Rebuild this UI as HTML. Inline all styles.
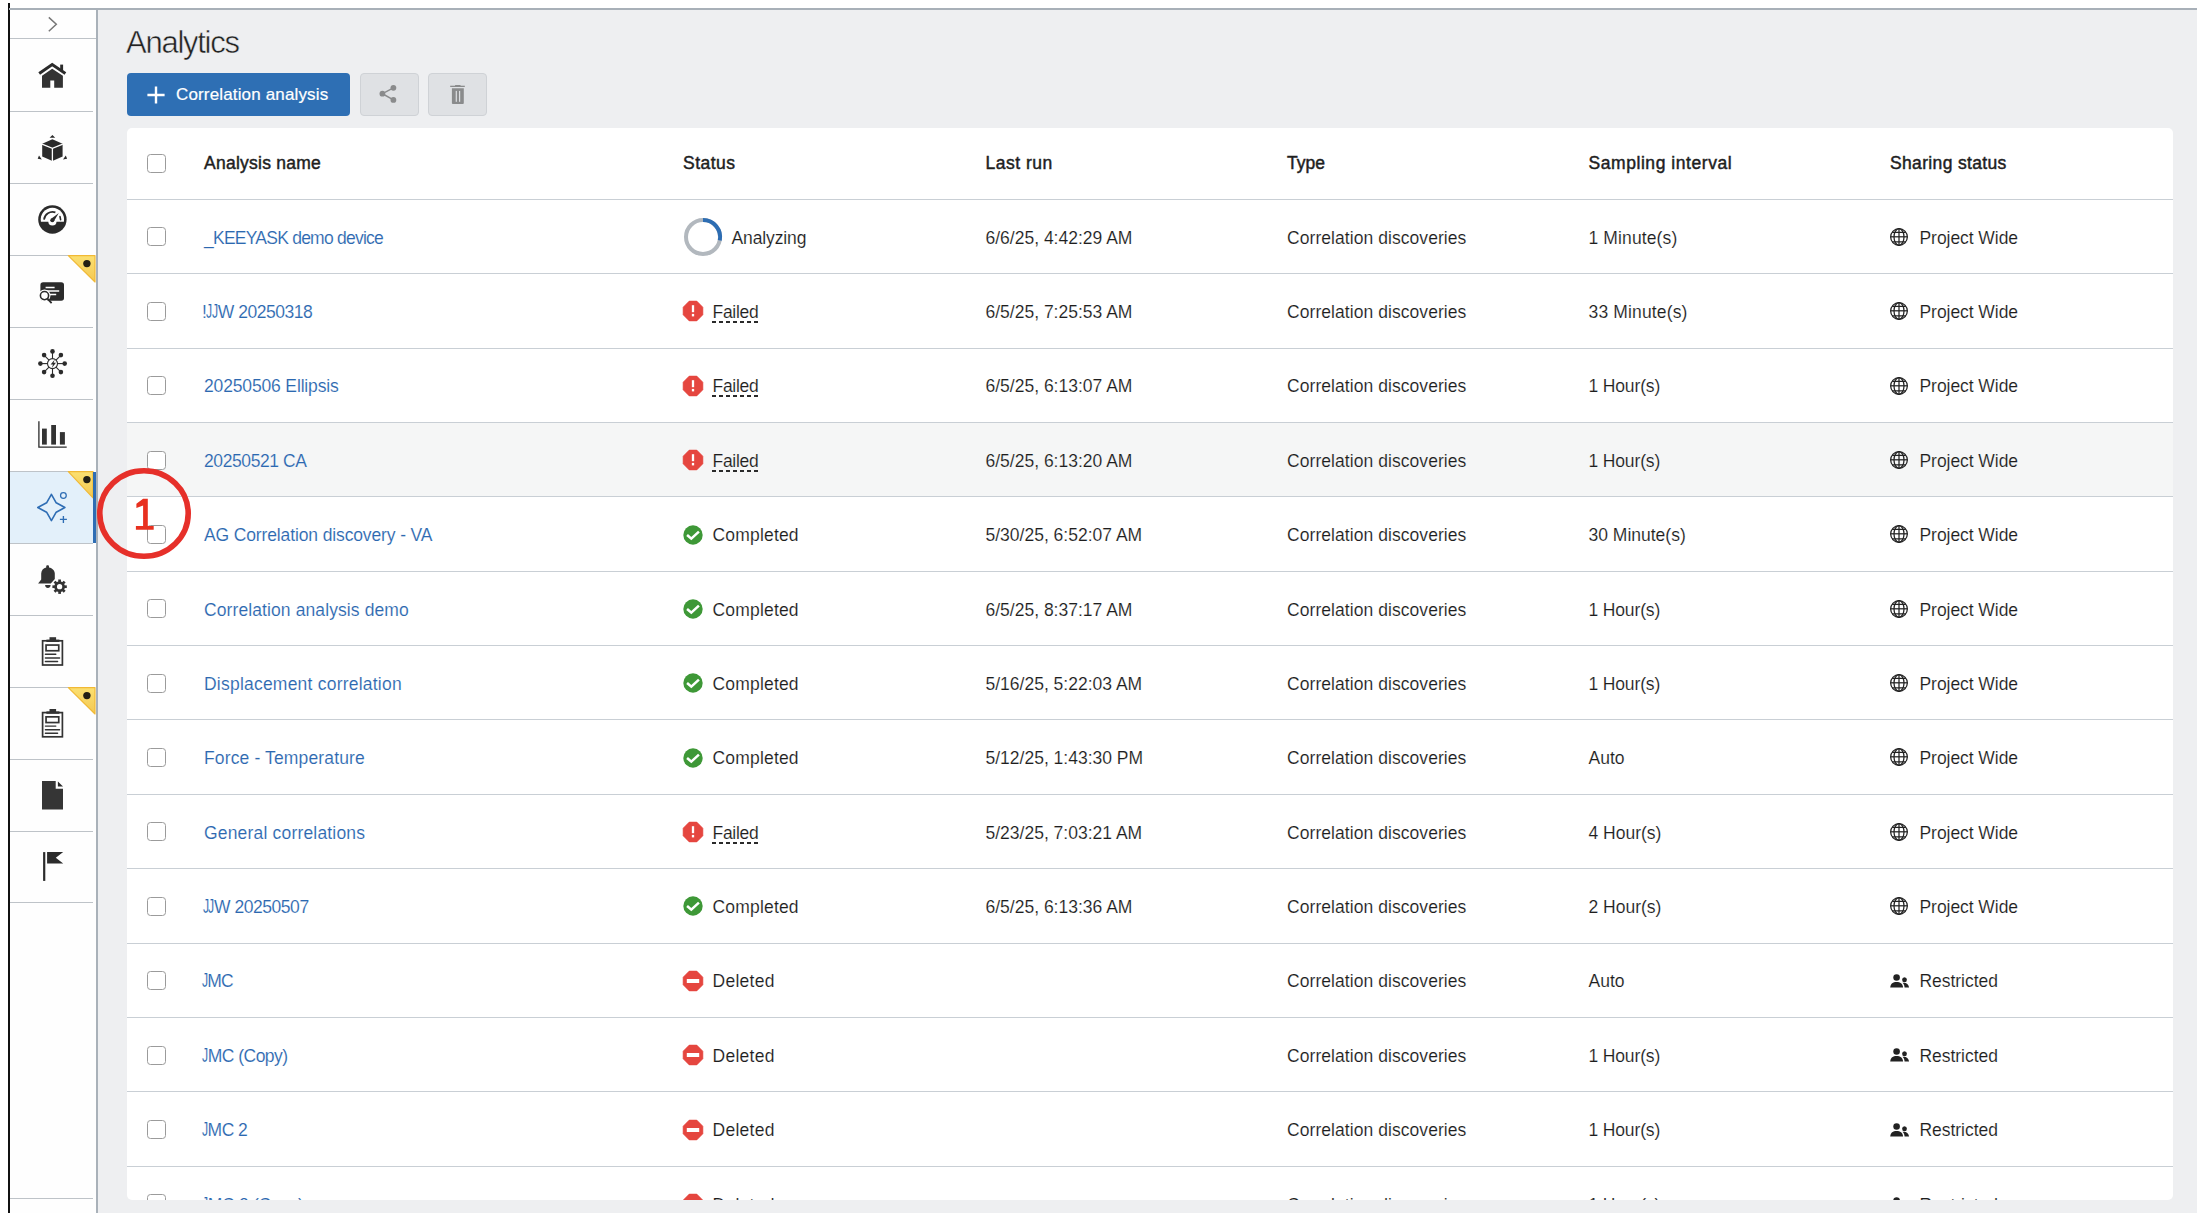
<!DOCTYPE html>
<html><head><meta charset="utf-8"><title>Analytics</title>
<style>
html,body{margin:0;padding:0;overflow:hidden;}
body{width:2204px;height:1218px;overflow:hidden;background:#fff;position:relative;font-family:"Liberation Sans",sans-serif;color:#222;}
#black{position:absolute;left:8px;top:3px;width:1.6px;height:1210px;background:#111;}
#topline{position:absolute;left:9px;top:8.2px;width:2188px;height:2px;background:#a8b0b8;}
#side{position:absolute;left:9.6px;top:10.2px;width:86.4px;height:1203px;background:#fefefe;}
#sideborder{position:absolute;left:96px;top:10.2px;width:2px;height:1203px;background:#a9b1b9;}
#main{position:absolute;left:98px;top:10.2px;width:2099px;height:1202.8px;background:#eeeff1;}
.ssep{position:absolute;left:9.6px;width:83.6px;height:1px;background:#bec3c8;}
#sel{position:absolute;left:9.6px;top:471.5px;width:86.4px;height:71.3px;background:#e3f0fa;}
#selbar{position:absolute;left:93px;top:471.7px;width:3px;height:71px;background:#2e6db4;}
#title{position:absolute;left:126.1px;top:26.1px;font-size:31px;line-height:34px;color:#222;letter-spacing:-1.28px;-webkit-text-stroke:0.5px #eeeff1;}
#addbtn{position:absolute;left:127px;top:73px;width:223px;height:43px;background:#2e6fb4;border-radius:4px;}
#addbtn .lbl{position:absolute;left:49px;top:10.5px;font-size:17px;line-height:22px;color:#fff;letter-spacing:0.15px;-webkit-text-stroke:0.2px #fff;}
.gbtn{position:absolute;top:73px;height:41px;background:#dfe1e4;border:1px solid #cfd2d6;border-radius:4px;}
#card{position:absolute;left:127px;top:128px;width:2046px;height:1072px;background:#fff;border-radius:5px;}
.sep{position:absolute;left:127px;width:2046px;height:1px;background:#c9cfd5;}
.hover{position:absolute;left:127px;width:2046px;background:#f5f6f6;}
.cb{position:absolute;left:147px;width:17px;height:17px;border:1px solid #9b9b9b;border-radius:3.5px;background:#fff;}
.t{position:absolute;font-size:17.5px;line-height:22px;white-space:nowrap;color:#1e1e1e;-webkit-text-stroke:0.12px #fff;}
.h{color:#1e1e1e;-webkit-text-stroke:0.45px #1e1e1e;}
.link{color:#2c68b0;}
.j{display:inline-block;transform:scale(0.7,1.18);transform-origin:left 70%;margin-right:-2.6px;}
.dash{position:absolute;left:712px;width:46px;height:2px;background:repeating-linear-gradient(90deg,#2a2a2a 0,#2a2a2a 4px,transparent 4px,transparent 7px);}
#clip{position:absolute;left:0;top:0;width:2204px;height:1200px;overflow:hidden;}
</style></head><body>
<svg width="0" height="0" style="position:absolute"><defs><linearGradient id="yg" x1="0" y1="0" x2="0" y2="1"><stop offset="0" stop-color="#fbe071"/><stop offset="1" stop-color="#f3c853"/></linearGradient></defs></svg>
<div id="main"></div>
<div id="side"></div>
<div id="sel"></div>
<div class="ssep" style="top:110.8px"></div>
<div class="ssep" style="top:183.1px"></div>
<div class="ssep" style="top:255.0px"></div>
<div class="ssep" style="top:327.0px"></div>
<div class="ssep" style="top:399.0px"></div>
<div class="ssep" style="top:471.0px"></div>
<div class="ssep" style="top:542.9px"></div>
<div class="ssep" style="top:615.0px"></div>
<div class="ssep" style="top:687.0px"></div>
<div class="ssep" style="top:758.7px"></div>
<div class="ssep" style="top:830.5px"></div>
<div class="ssep" style="top:902.2px"></div>
<div class="ssep" style="top:37.9px;width:86.4px"></div>
<div class="ssep" style="top:1197.6px"></div>
<svg style="position:absolute;left:0;top:0" width="100" height="910" viewBox="0 0 100 910">
 <polyline points="48.8,17.4 56.3,24.3 48.8,31.2" fill="none" stroke="#777" stroke-width="1.5"/>
 <polyline points="39.2,73.6 52.2,64.6 65.4,73.6" fill="none" stroke="#2b2b2b" stroke-width="3"/>
 <rect x="60.2" y="64.6" width="2.9" height="6.5" fill="#2b2b2b"/>
 <path d="M42,75.8 L52.2,68.7 L62.9,75.8 L62.9,87.8 L54.2,87.8 L54.2,80.4 L50.3,80.4 L50.3,87.8 L42,87.8 Z" fill="#333"/>
 <path d="M52.4,139.2 L62.6,143.8 L62.6,156.5 L52.4,161 L42.2,156.5 L42.2,143.8 Z" fill="#2b2b2b"/>
 <path d="M42,144.1 L52.4,148.4 L62.8,144.1 M52.4,148.4 V161.5" fill="none" stroke="#fff" stroke-width="1.3"/>
 <path d="M52.4,134.9 L55.2,137.7 L49.6,137.7 Z M39,155.6 L41.8,159.6 L37.7,158.8 Z M65.8,155.6 L67.1,158.8 L63,159.6 Z" fill="#2b2b2b"/>
 <circle cx="52.4" cy="219.5" r="14.2" fill="#2b2b2b"/>
 <path d="M40.9,221.7 A11.7,11.7 0 1 1 63.9,221.7 Z" fill="#fff"/>
 <circle cx="52.4" cy="221.5" r="4.1" fill="#fff"/>
 <path d="M44,219.6 A8.6,8.6 0 0 1 55.4,212.4" fill="none" stroke="#2b2b2b" stroke-width="1.7"/>
 <path d="M60,216.6 L60.6,219.7" stroke="#2b2b2b" stroke-width="1.6" stroke-linecap="round"/>
 <path d="M50.9,219 L58.8,213 L53.7,221.6 Z" fill="#2b2b2b"/>
 <circle cx="52.3" cy="220.3" r="2.05" fill="#2b2b2b"/>
 <rect x="40.4" y="282.2" width="23.6" height="18.6" rx="2.8" fill="#2b2b2b"/>
 <path d="M45.6,287.4 H54.6 M47,290.9 H59.2 M50,294.4 H56.2" stroke="#fff" stroke-width="1.5"/>
 <circle cx="44.5" cy="295.6" r="6" fill="#fff"/>
 <circle cx="44.5" cy="295.6" r="4.1" fill="#fff" stroke="#2b2b2b" stroke-width="1.6"/>
 <path d="M47.4,298.6 L51.6,303.2" stroke="#2b2b2b" stroke-width="1.8"/>
<g transform="translate(0.4,0)">
 <g stroke="#2b2b2b" stroke-width="1.1">
  <line x1="52.1" y1="351.6" x2="52.1" y2="375.6"/><line x1="40.1" y1="363.6" x2="64.1" y2="363.6"/>
  <line x1="43.6" y1="355.1" x2="60.6" y2="372.1"/><line x1="60.6" y1="355.1" x2="43.6" y2="372.1"/>
 </g>
 <g fill="#2b2b2b">
  <circle cx="52.1" cy="351.4" r="2.3"/><circle cx="52.1" cy="375.8" r="2.3"/>
  <circle cx="40" cy="363.6" r="2.3"/><circle cx="64.3" cy="363.6" r="2.3"/>
  <circle cx="43.7" cy="355.1" r="2.3"/><circle cx="60.5" cy="355.1" r="2.3"/>
  <circle cx="43.7" cy="372.1" r="2.3"/><circle cx="60.5" cy="372.1" r="2.3"/>
 </g>
 <circle cx="52.1" cy="363.6" r="5" fill="#fff" stroke="#2b2b2b" stroke-width="1.1"/>
 <path d="M54.4,359.4 L50.2,364.6 L52.6,364.6 L51.4,368 L55.6,362.8 L53.2,362.8 Z" fill="#2b2b2b"/>
</g>
 <path d="M38.9,421.2 V447.2 H66.7" fill="none" stroke="#2b2b2b" stroke-width="1.3"/>
 <rect x="42" y="428.6" width="4.8" height="16" fill="#333"/>
 <rect x="51.2" y="425" width="4.8" height="19.6" fill="#333"/>
 <rect x="59.9" y="432.1" width="5" height="12.5" fill="#333"/>
 <path d="M38.1,583.6 L41.2,579.6 L41.2,573.6 C41.2,570.3 43.4,568.1 46.2,567.4 L46.2,566.4 C46.2,565 49,565 49,566.4 L49,567.4 C52.4,568.1 54.8,570.6 54.8,573.6 L54.8,578.9 L50.8,583.6 Z" fill="#333"/>
 <path d="M45.1,585.1 H50.6 A2.75,2.8 0 0 1 45.1,585.1 Z" fill="#333"/>
 <g transform="translate(59.6,586.7)" fill="#333">
  <circle r="4" fill="none" stroke="#333" stroke-width="2.7"/>
  <rect x="-1.35" y="-7.2" width="2.7" height="3.4"/><rect x="-1.35" y="3.8" width="2.7" height="3.4"/>
  <rect x="-7.2" y="-1.35" width="3.4" height="2.7"/><rect x="3.8" y="-1.35" width="3.4" height="2.7"/>
  <g transform="rotate(45)"><rect x="-1.35" y="-7.2" width="2.7" height="3.4"/><rect x="-1.35" y="3.8" width="2.7" height="3.4"/>
  <rect x="-7.2" y="-1.35" width="3.4" height="2.7"/><rect x="3.8" y="-1.35" width="3.4" height="2.7"/></g>
 </g>
 <g>
  <rect x="42.6" y="640.8" width="19.8" height="24.2" fill="none" stroke="#333" stroke-width="1.7"/>
  <rect x="49.5" y="637.2" width="6.6" height="3.2" fill="#333"/>
  <rect x="46.4" y="639.6" width="13" height="2.4" fill="#333"/>
  <rect x="46.05" y="645.05" width="12.7" height="5.7" fill="none" stroke="#333" stroke-width="1.7"/>
  <path d="M45.4,654.3 H55.8 M45.4,658 H59.6 M45.4,661.5 H57.6" stroke="#333" stroke-width="1.4" stroke-linecap="round"/>
 </g>
 <g transform="translate(0,71.8)">
  <rect x="42.6" y="640.8" width="19.8" height="24.2" fill="none" stroke="#333" stroke-width="1.7"/>
  <rect x="49.5" y="637.2" width="6.6" height="3.2" fill="#333"/>
  <rect x="46.4" y="639.6" width="13" height="2.4" fill="#333"/>
  <rect x="46.05" y="645.05" width="12.7" height="5.7" fill="none" stroke="#333" stroke-width="1.7"/>
  <path d="M45.4,654.3 H55.8 M45.4,658 H59.6 M45.4,661.5 H57.6" stroke="#333" stroke-width="1.4" stroke-linecap="round"/>
 </g>
 <path d="M42,781.1 H55.7 V788.7 H63 V809.5 H42 Z" fill="#353535"/>
 <path d="M57.9,781.4 L63,786.6 L57.9,786.6 Z" fill="#2b2b2b"/>
 <rect x="43.1" y="852.1" width="2.2" height="28.8" fill="#2b2b2b"/>
 <path d="M47.1,852.1 L63.2,852.1 L55.8,857.8 L63.2,863.4 L47.1,863.4 Z" fill="#2b2b2b"/>
 <path d="M51.4,494.3 L46.6,502.8 L37.8,507.5 L46.6,512.2 L51.4,520.6 L56.2,512.2 L64.9,507.5 L56.2,502.8 Z" fill="none" stroke="#2e6db4" stroke-width="1.6" stroke-linejoin="round"/>
 <circle cx="63.4" cy="495.4" r="2.85" fill="none" stroke="#2e6db4" stroke-width="1.25"/>
 <path d="M63.4,515.9 V522.9 M59.9,519.4 H66.9" stroke="#2e6db4" stroke-width="1.35"/>
</svg>

<svg style="position:absolute;left:67px;top:254.9px" width="30" height="30" viewBox="0 0 30 30"><path d="M1.3,0.6 L28.0,0.6 L28.0,27.0 Z" fill="url(#yg)" stroke="#f1b935" stroke-width="1.2" stroke-linejoin="round"/><circle cx="19.9" cy="8.6" r="3.7" fill="#231f14"/></svg>
<svg style="position:absolute;left:67px;top:470.8px" width="30" height="30" viewBox="0 0 30 30"><path d="M1.3,0.6 L26.0,0.6 L26.0,26.8 Z" fill="url(#yg)" stroke="#f1b935" stroke-width="1.2" stroke-linejoin="round"/><circle cx="19.9" cy="8.6" r="3.7" fill="#231f14"/></svg>
<svg style="position:absolute;left:67px;top:686.9px" width="30" height="30" viewBox="0 0 30 30"><path d="M1.3,0.6 L28.0,0.6 L28.0,27.0 Z" fill="url(#yg)" stroke="#f1b935" stroke-width="1.2" stroke-linejoin="round"/><circle cx="19.9" cy="8.6" r="3.7" fill="#231f14"/></svg>
<div id="selbar"></div>
<div id="sideborder"></div>
<div id="black"></div>
<div id="topline"></div>

<div id="title">Analytics</div>
<div id="addbtn">
 <svg style="position:absolute;left:20px;top:12.5px" width="18" height="18" viewBox="0 0 18 18"><path d="M9,0.4 V17.6 M0.4,9 H17.6" stroke="#fff" stroke-width="2.4"/></svg>
 <div class="lbl">Correlation analysis</div>
</div>
<div class="gbtn" style="left:359.5px;width:57.5px;">
 <svg style="position:absolute;left:17px;top:10px" width="20" height="20" viewBox="0 0 20 20" fill="#8a8b8c">
  <circle cx="15.4" cy="3.8" r="2.9"/><circle cx="4.4" cy="9.7" r="2.9"/><circle cx="15.4" cy="15.9" r="2.9"/>
  <path d="M15.4,3.8 L4.4,9.7 L15.4,15.9" fill="none" stroke="#8a8b8c" stroke-width="1.5"/>
 </svg>
</div>
<div class="gbtn" style="left:428px;width:57px;">
 <svg style="position:absolute;left:20px;top:11px" width="18" height="20" viewBox="0 0 18 20" fill="#8a8b8c">
  <rect x="1.2" y="0.7" width="14.6" height="1.3"/><rect x="6" y="0" width="5.6" height="1.2" rx="0.5"/>
  <path d="M2.9,3.2 H14.8 V18 Q14.8,19 13.8,19 H3.9 Q2.9,19 2.9,18 Z"/>
  <rect x="6.7" y="5.9" width="1.2" height="10.9" fill="#dcdee1"/><rect x="10" y="5.9" width="1.2" height="10.9" fill="#dcdee1"/>
 </svg>
</div>

<div id="card"></div>
<div id="clip">
<div class="sep" style="top:198.80px"></div>
<div class="cb" style="top:154px"></div>
<div class="t h" style="left:204px;top:152.10px;letter-spacing:0.25px">Analysis name</div>
<div class="t h" style="left:683px;top:152.10px;letter-spacing:0.46px">Status</div>
<div class="t h" style="left:985.5px;top:152.10px;letter-spacing:0.50px">Last run</div>
<div class="t h" style="left:1287px;top:152.10px">Type</div>
<div class="t h" style="left:1588.5px;top:152.10px;letter-spacing:0.56px">Sampling interval</div>
<div class="t h" style="left:1890px;top:152.10px;letter-spacing:0.34px">Sharing status</div>
<div class="sep" style="top:273.18px"></div>
<div class="cb" style="top:227.39px"></div>
<div class="t link" style="left:204px;top:226.69px;letter-spacing:-0.76px">_KEEYASK demo device</div>
<svg style="position:absolute;left:680.5px;top:215.09px" width="44" height="44" viewBox="0 0 44 44"><circle cx="22" cy="22" r="17" fill="none" stroke="#b2b8be" stroke-width="4"/><path d="M22,5 A17,17 0 0 1 38.8,25.3" fill="none" stroke="#2d6db3" stroke-width="4"/></svg>
<div class="t" style="left:731.5px;top:226.69px;letter-spacing:-0.12px">Analyzing</div>
<div class="t" style="left:985.5px;top:226.69px">6/6/25, 4:42:29 AM</div>
<div class="t" style="left:1287px;top:226.69px;letter-spacing:0.06px">Correlation discoveries</div>
<div class="t" style="left:1588.5px;top:226.69px;letter-spacing:0.12px">1 Minute(s)</div>
<div style="position:absolute;left:1889.25px;top:226.79px;width:20px;height:20px"><svg width="20" height="20" viewBox="0 0 20 20" fill="none" stroke="#222" stroke-width="1.25"><circle cx="10" cy="10" r="8.35"/><ellipse cx="10" cy="10" rx="5" ry="8.35"/><line x1="10" y1="1.6" x2="10" y2="18.4"/><line x1="1.6" y1="9.8" x2="18.4" y2="9.8"/><path d="M3.2,5.4 H16.8 M3.2,14.9 H16.8"/></svg></div>
<div class="t" style="left:1919.5px;top:226.69px;letter-spacing:-0.06px">Project Wide</div><div class="sep" style="top:347.56px"></div>
<div class="cb" style="top:301.77px"></div>
<div class="t link" style="left:202px;top:301.07px;letter-spacing:-0.48px">!<span class="j">J</span><span class="j">J</span>W 20250318</div>
<div style="position:absolute;left:682px;top:300.37px;width:22px;height:22px"><svg class="si" width="22" height="22" viewBox="0 0 22 22"><polygon points="7.2,1.1 14.8,1.1 20.9,7.2 20.9,14.8 14.8,20.9 7.2,20.9 1.1,14.8 1.1,7.2" fill="#e5463f" stroke="#e5463f" stroke-width="0.6" stroke-linejoin="round"/><rect x="9.85" y="5.2" width="2.3" height="7" fill="#fff"/><rect x="9.85" y="13.9" width="2.3" height="2.5" fill="#fff"/></svg></div>
<div class="t" style="left:712.5px;top:301.07px;letter-spacing:-0.28px">Failed</div>
<div class="dash" style="top:321px"></div>
<div class="t" style="left:985.5px;top:301.07px">6/5/25, 7:25:53 AM</div>
<div class="t" style="left:1287px;top:301.07px;letter-spacing:0.06px">Correlation discoveries</div>
<div class="t" style="left:1588.5px;top:301.07px;letter-spacing:0.15px">33 Minute(s)</div>
<div style="position:absolute;left:1889.25px;top:301.17px;width:20px;height:20px"><svg width="20" height="20" viewBox="0 0 20 20" fill="none" stroke="#222" stroke-width="1.25"><circle cx="10" cy="10" r="8.35"/><ellipse cx="10" cy="10" rx="5" ry="8.35"/><line x1="10" y1="1.6" x2="10" y2="18.4"/><line x1="1.6" y1="9.8" x2="18.4" y2="9.8"/><path d="M3.2,5.4 H16.8 M3.2,14.9 H16.8"/></svg></div>
<div class="t" style="left:1919.5px;top:301.07px;letter-spacing:-0.06px">Project Wide</div><div class="sep" style="top:421.94px"></div>
<div class="cb" style="top:376.15px"></div>
<div class="t link" style="left:204px;top:375.45px;letter-spacing:-0.15px">20250506 Ellipsis</div>
<div style="position:absolute;left:682px;top:374.75px;width:22px;height:22px"><svg class="si" width="22" height="22" viewBox="0 0 22 22"><polygon points="7.2,1.1 14.8,1.1 20.9,7.2 20.9,14.8 14.8,20.9 7.2,20.9 1.1,14.8 1.1,7.2" fill="#e5463f" stroke="#e5463f" stroke-width="0.6" stroke-linejoin="round"/><rect x="9.85" y="5.2" width="2.3" height="7" fill="#fff"/><rect x="9.85" y="13.9" width="2.3" height="2.5" fill="#fff"/></svg></div>
<div class="t" style="left:712.5px;top:375.45px;letter-spacing:-0.28px">Failed</div>
<div class="dash" style="top:395px"></div>
<div class="t" style="left:985.5px;top:375.45px">6/5/25, 6:13:07 AM</div>
<div class="t" style="left:1287px;top:375.45px;letter-spacing:0.06px">Correlation discoveries</div>
<div class="t" style="left:1588.5px;top:375.45px;letter-spacing:-0.15px">1 Hour(s)</div>
<div style="position:absolute;left:1889.25px;top:375.55px;width:20px;height:20px"><svg width="20" height="20" viewBox="0 0 20 20" fill="none" stroke="#222" stroke-width="1.25"><circle cx="10" cy="10" r="8.35"/><ellipse cx="10" cy="10" rx="5" ry="8.35"/><line x1="10" y1="1.6" x2="10" y2="18.4"/><line x1="1.6" y1="9.8" x2="18.4" y2="9.8"/><path d="M3.2,5.4 H16.8 M3.2,14.9 H16.8"/></svg></div>
<div class="t" style="left:1919.5px;top:375.45px;letter-spacing:-0.06px">Project Wide</div><div class="hover" style="top:423.14px;height:73.78px"></div>
<div class="sep" style="top:496.32px"></div>
<div class="cb" style="top:450.53px"></div>
<div class="t link" style="left:204px;top:449.83px;letter-spacing:-0.40px">20250521 CA</div>
<div style="position:absolute;left:682px;top:449.13px;width:22px;height:22px"><svg class="si" width="22" height="22" viewBox="0 0 22 22"><polygon points="7.2,1.1 14.8,1.1 20.9,7.2 20.9,14.8 14.8,20.9 7.2,20.9 1.1,14.8 1.1,7.2" fill="#e5463f" stroke="#e5463f" stroke-width="0.6" stroke-linejoin="round"/><rect x="9.85" y="5.2" width="2.3" height="7" fill="#fff"/><rect x="9.85" y="13.9" width="2.3" height="2.5" fill="#fff"/></svg></div>
<div class="t" style="left:712.5px;top:449.83px;letter-spacing:-0.28px">Failed</div>
<div class="dash" style="top:470px"></div>
<div class="t" style="left:985.5px;top:449.83px">6/5/25, 6:13:20 AM</div>
<div class="t" style="left:1287px;top:449.83px;letter-spacing:0.06px">Correlation discoveries</div>
<div class="t" style="left:1588.5px;top:449.83px;letter-spacing:-0.15px">1 Hour(s)</div>
<div style="position:absolute;left:1889.25px;top:449.93px;width:20px;height:20px"><svg width="20" height="20" viewBox="0 0 20 20" fill="none" stroke="#222" stroke-width="1.25"><circle cx="10" cy="10" r="8.35"/><ellipse cx="10" cy="10" rx="5" ry="8.35"/><line x1="10" y1="1.6" x2="10" y2="18.4"/><line x1="1.6" y1="9.8" x2="18.4" y2="9.8"/><path d="M3.2,5.4 H16.8 M3.2,14.9 H16.8"/></svg></div>
<div class="t" style="left:1919.5px;top:449.83px;letter-spacing:-0.06px">Project Wide</div><div class="sep" style="top:570.70px"></div>
<div class="cb" style="top:524.91px"></div>
<div class="t link" style="left:204px;top:524.21px;letter-spacing:-0.13px">AG Correlation discovery - VA</div>
<div style="position:absolute;left:682px;top:523.51px;width:22px;height:22px"><svg class="si" width="22" height="22" viewBox="0 0 22 22"><circle cx="11" cy="11" r="9.7" fill="#3e9837"/><path d="M6,11.8 L9.3,14.6 L16,8.4" fill="none" stroke="#fff" stroke-width="2.5" stroke-linecap="square"/></svg></div>
<div class="t" style="left:712.5px;top:524.21px;letter-spacing:0.18px">Completed</div>
<div class="t" style="left:985.5px;top:524.21px">5/30/25, 6:52:07 AM</div>
<div class="t" style="left:1287px;top:524.21px;letter-spacing:0.06px">Correlation discoveries</div>
<div class="t" style="left:1588.5px;top:524.21px">30 Minute(s)</div>
<div style="position:absolute;left:1889.25px;top:524.31px;width:20px;height:20px"><svg width="20" height="20" viewBox="0 0 20 20" fill="none" stroke="#222" stroke-width="1.25"><circle cx="10" cy="10" r="8.35"/><ellipse cx="10" cy="10" rx="5" ry="8.35"/><line x1="10" y1="1.6" x2="10" y2="18.4"/><line x1="1.6" y1="9.8" x2="18.4" y2="9.8"/><path d="M3.2,5.4 H16.8 M3.2,14.9 H16.8"/></svg></div>
<div class="t" style="left:1919.5px;top:524.21px;letter-spacing:-0.06px">Project Wide</div><div class="sep" style="top:645.08px"></div>
<div class="cb" style="top:599.29px"></div>
<div class="t link" style="left:204px;top:598.59px;letter-spacing:0.10px">Correlation analysis demo</div>
<div style="position:absolute;left:682px;top:597.89px;width:22px;height:22px"><svg class="si" width="22" height="22" viewBox="0 0 22 22"><circle cx="11" cy="11" r="9.7" fill="#3e9837"/><path d="M6,11.8 L9.3,14.6 L16,8.4" fill="none" stroke="#fff" stroke-width="2.5" stroke-linecap="square"/></svg></div>
<div class="t" style="left:712.5px;top:598.59px;letter-spacing:0.18px">Completed</div>
<div class="t" style="left:985.5px;top:598.59px">6/5/25, 8:37:17 AM</div>
<div class="t" style="left:1287px;top:598.59px;letter-spacing:0.06px">Correlation discoveries</div>
<div class="t" style="left:1588.5px;top:598.59px;letter-spacing:-0.15px">1 Hour(s)</div>
<div style="position:absolute;left:1889.25px;top:598.69px;width:20px;height:20px"><svg width="20" height="20" viewBox="0 0 20 20" fill="none" stroke="#222" stroke-width="1.25"><circle cx="10" cy="10" r="8.35"/><ellipse cx="10" cy="10" rx="5" ry="8.35"/><line x1="10" y1="1.6" x2="10" y2="18.4"/><line x1="1.6" y1="9.8" x2="18.4" y2="9.8"/><path d="M3.2,5.4 H16.8 M3.2,14.9 H16.8"/></svg></div>
<div class="t" style="left:1919.5px;top:598.59px;letter-spacing:-0.06px">Project Wide</div><div class="sep" style="top:719.46px"></div>
<div class="cb" style="top:673.67px"></div>
<div class="t link" style="left:204px;top:672.97px;letter-spacing:0.22px">Displacement correlation</div>
<div style="position:absolute;left:682px;top:672.27px;width:22px;height:22px"><svg class="si" width="22" height="22" viewBox="0 0 22 22"><circle cx="11" cy="11" r="9.7" fill="#3e9837"/><path d="M6,11.8 L9.3,14.6 L16,8.4" fill="none" stroke="#fff" stroke-width="2.5" stroke-linecap="square"/></svg></div>
<div class="t" style="left:712.5px;top:672.97px;letter-spacing:0.18px">Completed</div>
<div class="t" style="left:985.5px;top:672.97px">5/16/25, 5:22:03 AM</div>
<div class="t" style="left:1287px;top:672.97px;letter-spacing:0.06px">Correlation discoveries</div>
<div class="t" style="left:1588.5px;top:672.97px;letter-spacing:-0.15px">1 Hour(s)</div>
<div style="position:absolute;left:1889.25px;top:673.07px;width:20px;height:20px"><svg width="20" height="20" viewBox="0 0 20 20" fill="none" stroke="#222" stroke-width="1.25"><circle cx="10" cy="10" r="8.35"/><ellipse cx="10" cy="10" rx="5" ry="8.35"/><line x1="10" y1="1.6" x2="10" y2="18.4"/><line x1="1.6" y1="9.8" x2="18.4" y2="9.8"/><path d="M3.2,5.4 H16.8 M3.2,14.9 H16.8"/></svg></div>
<div class="t" style="left:1919.5px;top:672.97px;letter-spacing:-0.06px">Project Wide</div><div class="sep" style="top:793.84px"></div>
<div class="cb" style="top:748.05px"></div>
<div class="t link" style="left:204px;top:747.35px;letter-spacing:0.14px">Force - Temperature</div>
<div style="position:absolute;left:682px;top:746.65px;width:22px;height:22px"><svg class="si" width="22" height="22" viewBox="0 0 22 22"><circle cx="11" cy="11" r="9.7" fill="#3e9837"/><path d="M6,11.8 L9.3,14.6 L16,8.4" fill="none" stroke="#fff" stroke-width="2.5" stroke-linecap="square"/></svg></div>
<div class="t" style="left:712.5px;top:747.35px;letter-spacing:0.18px">Completed</div>
<div class="t" style="left:985.5px;top:747.35px">5/12/25, 1:43:30 PM</div>
<div class="t" style="left:1287px;top:747.35px;letter-spacing:0.06px">Correlation discoveries</div>
<div class="t" style="left:1588.5px;top:747.35px">Auto</div>
<div style="position:absolute;left:1889.25px;top:747.45px;width:20px;height:20px"><svg width="20" height="20" viewBox="0 0 20 20" fill="none" stroke="#222" stroke-width="1.25"><circle cx="10" cy="10" r="8.35"/><ellipse cx="10" cy="10" rx="5" ry="8.35"/><line x1="10" y1="1.6" x2="10" y2="18.4"/><line x1="1.6" y1="9.8" x2="18.4" y2="9.8"/><path d="M3.2,5.4 H16.8 M3.2,14.9 H16.8"/></svg></div>
<div class="t" style="left:1919.5px;top:747.35px;letter-spacing:-0.06px">Project Wide</div><div class="sep" style="top:868.22px"></div>
<div class="cb" style="top:822.43px"></div>
<div class="t link" style="left:204px;top:821.73px;letter-spacing:0.18px">General correlations</div>
<div style="position:absolute;left:682px;top:821.03px;width:22px;height:22px"><svg class="si" width="22" height="22" viewBox="0 0 22 22"><polygon points="7.2,1.1 14.8,1.1 20.9,7.2 20.9,14.8 14.8,20.9 7.2,20.9 1.1,14.8 1.1,7.2" fill="#e5463f" stroke="#e5463f" stroke-width="0.6" stroke-linejoin="round"/><rect x="9.85" y="5.2" width="2.3" height="7" fill="#fff"/><rect x="9.85" y="13.9" width="2.3" height="2.5" fill="#fff"/></svg></div>
<div class="t" style="left:712.5px;top:821.73px;letter-spacing:-0.28px">Failed</div>
<div class="dash" style="top:842px"></div>
<div class="t" style="left:985.5px;top:821.73px">5/23/25, 7:03:21 AM</div>
<div class="t" style="left:1287px;top:821.73px;letter-spacing:0.06px">Correlation discoveries</div>
<div class="t" style="left:1588.5px;top:821.73px">4 Hour(s)</div>
<div style="position:absolute;left:1889.25px;top:821.83px;width:20px;height:20px"><svg width="20" height="20" viewBox="0 0 20 20" fill="none" stroke="#222" stroke-width="1.25"><circle cx="10" cy="10" r="8.35"/><ellipse cx="10" cy="10" rx="5" ry="8.35"/><line x1="10" y1="1.6" x2="10" y2="18.4"/><line x1="1.6" y1="9.8" x2="18.4" y2="9.8"/><path d="M3.2,5.4 H16.8 M3.2,14.9 H16.8"/></svg></div>
<div class="t" style="left:1919.5px;top:821.73px;letter-spacing:-0.06px">Project Wide</div><div class="sep" style="top:942.60px"></div>
<div class="cb" style="top:896.81px"></div>
<div class="t link" style="left:202.5px;top:896.11px;letter-spacing:-0.45px"><span class="j">J</span><span class="j">J</span>W 20250507</div>
<div style="position:absolute;left:682px;top:895.41px;width:22px;height:22px"><svg class="si" width="22" height="22" viewBox="0 0 22 22"><circle cx="11" cy="11" r="9.7" fill="#3e9837"/><path d="M6,11.8 L9.3,14.6 L16,8.4" fill="none" stroke="#fff" stroke-width="2.5" stroke-linecap="square"/></svg></div>
<div class="t" style="left:712.5px;top:896.11px;letter-spacing:0.18px">Completed</div>
<div class="t" style="left:985.5px;top:896.11px">6/5/25, 6:13:36 AM</div>
<div class="t" style="left:1287px;top:896.11px;letter-spacing:0.06px">Correlation discoveries</div>
<div class="t" style="left:1588.5px;top:896.11px">2 Hour(s)</div>
<div style="position:absolute;left:1889.25px;top:896.21px;width:20px;height:20px"><svg width="20" height="20" viewBox="0 0 20 20" fill="none" stroke="#222" stroke-width="1.25"><circle cx="10" cy="10" r="8.35"/><ellipse cx="10" cy="10" rx="5" ry="8.35"/><line x1="10" y1="1.6" x2="10" y2="18.4"/><line x1="1.6" y1="9.8" x2="18.4" y2="9.8"/><path d="M3.2,5.4 H16.8 M3.2,14.9 H16.8"/></svg></div>
<div class="t" style="left:1919.5px;top:896.11px;letter-spacing:-0.06px">Project Wide</div><div class="sep" style="top:1016.98px"></div>
<div class="cb" style="top:971.19px"></div>
<div class="t link" style="left:202px;top:970.49px;letter-spacing:-0.90px"><span class="j">J</span>MC</div>
<div style="position:absolute;left:682px;top:969.79px;width:22px;height:22px"><svg class="si" width="22" height="22" viewBox="0 0 22 22"><polygon points="7.2,1.1 14.8,1.1 20.9,7.2 20.9,14.8 14.8,20.9 7.2,20.9 1.1,14.8 1.1,7.2" fill="#e5463f" stroke="#e5463f" stroke-width="0.6" stroke-linejoin="round"/><rect x="4.8" y="9" width="12.4" height="4" fill="#fff"/></svg></div>
<div class="t" style="left:712.5px;top:970.49px;letter-spacing:0.27px">Deleted</div>
<div class="t" style="left:1287px;top:970.49px;letter-spacing:0.06px">Correlation discoveries</div>
<div class="t" style="left:1588.5px;top:970.49px">Auto</div>
<div style="position:absolute;left:1890px;top:971.79px;width:20px;height:17px"><svg width="20" height="17" viewBox="0 0 20 17" fill="#222"><circle cx="6.6" cy="5.5" r="3.3"/><path d="M0.2,15.4 C0.5,11.6 3,9.9 6.6,9.9 C10.2,9.9 12.7,11.6 13.1,15.4 Z"/><ellipse cx="14.5" cy="7.8" rx="2.4" ry="2.5"/><path d="M12.6,10.8 C15.8,10.2 18.6,11.8 19.1,15.4 L14.6,15.4 C14.4,13.4 13.8,12 12.6,10.8 Z"/></svg></div>
<div class="t" style="left:1919.5px;top:970.49px;letter-spacing:-0.04px">Restricted</div><div class="sep" style="top:1091.36px"></div>
<div class="cb" style="top:1045.57px"></div>
<div class="t link" style="left:202px;top:1044.87px;letter-spacing:-0.51px"><span class="j">J</span>MC (Copy)</div>
<div style="position:absolute;left:682px;top:1044.17px;width:22px;height:22px"><svg class="si" width="22" height="22" viewBox="0 0 22 22"><polygon points="7.2,1.1 14.8,1.1 20.9,7.2 20.9,14.8 14.8,20.9 7.2,20.9 1.1,14.8 1.1,7.2" fill="#e5463f" stroke="#e5463f" stroke-width="0.6" stroke-linejoin="round"/><rect x="4.8" y="9" width="12.4" height="4" fill="#fff"/></svg></div>
<div class="t" style="left:712.5px;top:1044.87px;letter-spacing:0.27px">Deleted</div>
<div class="t" style="left:1287px;top:1044.87px;letter-spacing:0.06px">Correlation discoveries</div>
<div class="t" style="left:1588.5px;top:1044.87px;letter-spacing:-0.15px">1 Hour(s)</div>
<div style="position:absolute;left:1890px;top:1046.17px;width:20px;height:17px"><svg width="20" height="17" viewBox="0 0 20 17" fill="#222"><circle cx="6.6" cy="5.5" r="3.3"/><path d="M0.2,15.4 C0.5,11.6 3,9.9 6.6,9.9 C10.2,9.9 12.7,11.6 13.1,15.4 Z"/><ellipse cx="14.5" cy="7.8" rx="2.4" ry="2.5"/><path d="M12.6,10.8 C15.8,10.2 18.6,11.8 19.1,15.4 L14.6,15.4 C14.4,13.4 13.8,12 12.6,10.8 Z"/></svg></div>
<div class="t" style="left:1919.5px;top:1044.87px;letter-spacing:-0.04px">Restricted</div><div class="sep" style="top:1165.74px"></div>
<div class="cb" style="top:1119.95px"></div>
<div class="t link" style="left:202px;top:1119.25px;letter-spacing:-0.55px"><span class="j">J</span>MC 2</div>
<div style="position:absolute;left:682px;top:1118.55px;width:22px;height:22px"><svg class="si" width="22" height="22" viewBox="0 0 22 22"><polygon points="7.2,1.1 14.8,1.1 20.9,7.2 20.9,14.8 14.8,20.9 7.2,20.9 1.1,14.8 1.1,7.2" fill="#e5463f" stroke="#e5463f" stroke-width="0.6" stroke-linejoin="round"/><rect x="4.8" y="9" width="12.4" height="4" fill="#fff"/></svg></div>
<div class="t" style="left:712.5px;top:1119.25px;letter-spacing:0.27px">Deleted</div>
<div class="t" style="left:1287px;top:1119.25px;letter-spacing:0.06px">Correlation discoveries</div>
<div class="t" style="left:1588.5px;top:1119.25px;letter-spacing:-0.15px">1 Hour(s)</div>
<div style="position:absolute;left:1890px;top:1120.55px;width:20px;height:17px"><svg width="20" height="17" viewBox="0 0 20 17" fill="#222"><circle cx="6.6" cy="5.5" r="3.3"/><path d="M0.2,15.4 C0.5,11.6 3,9.9 6.6,9.9 C10.2,9.9 12.7,11.6 13.1,15.4 Z"/><ellipse cx="14.5" cy="7.8" rx="2.4" ry="2.5"/><path d="M12.6,10.8 C15.8,10.2 18.6,11.8 19.1,15.4 L14.6,15.4 C14.4,13.4 13.8,12 12.6,10.8 Z"/></svg></div>
<div class="t" style="left:1919.5px;top:1119.25px;letter-spacing:-0.04px">Restricted</div><div class="sep" style="top:1240.12px"></div>
<div class="cb" style="top:1194.33px"></div>
<div class="t link" style="left:202px;top:1193.63px;letter-spacing:-0.32px"><span class="j">J</span>MC 2 (Copy)</div>
<div style="position:absolute;left:682px;top:1192.93px;width:22px;height:22px"><svg class="si" width="22" height="22" viewBox="0 0 22 22"><polygon points="7.2,1.1 14.8,1.1 20.9,7.2 20.9,14.8 14.8,20.9 7.2,20.9 1.1,14.8 1.1,7.2" fill="#e5463f" stroke="#e5463f" stroke-width="0.6" stroke-linejoin="round"/><rect x="4.8" y="9" width="12.4" height="4" fill="#fff"/></svg></div>
<div class="t" style="left:712.5px;top:1193.63px;letter-spacing:0.27px">Deleted</div>
<div class="t" style="left:1287px;top:1193.63px;letter-spacing:0.06px">Correlation discoveries</div>
<div class="t" style="left:1588.5px;top:1193.63px;letter-spacing:-0.15px">1 Hour(s)</div>
<div style="position:absolute;left:1890px;top:1194.93px;width:20px;height:17px"><svg width="20" height="17" viewBox="0 0 20 17" fill="#222"><circle cx="6.6" cy="5.5" r="3.3"/><path d="M0.2,15.4 C0.5,11.6 3,9.9 6.6,9.9 C10.2,9.9 12.7,11.6 13.1,15.4 Z"/><ellipse cx="14.5" cy="7.8" rx="2.4" ry="2.5"/><path d="M12.6,10.8 C15.8,10.2 18.6,11.8 19.1,15.4 L14.6,15.4 C14.4,13.4 13.8,12 12.6,10.8 Z"/></svg></div>
<div class="t" style="left:1919.5px;top:1193.63px;letter-spacing:-0.04px">Restricted</div>
</div>

<svg style="position:absolute;left:90px;top:460px" width="110" height="110" viewBox="90 460 110 110">
 <ellipse cx="144" cy="513.5" rx="44.2" ry="42.7" fill="none" stroke="#e6302a" stroke-width="5.6"/>
 <path d="M143.1,498.8 L147.8,498.8 L147.8,526.1 L153.7,526.1 L153.7,529.8 L135.9,529.8 L135.9,526.1 L143.1,526.1 L143.1,505.6 L136.4,508 L136.4,503.8 Z" fill="#e8301f"/>
</svg>
</body></html>
